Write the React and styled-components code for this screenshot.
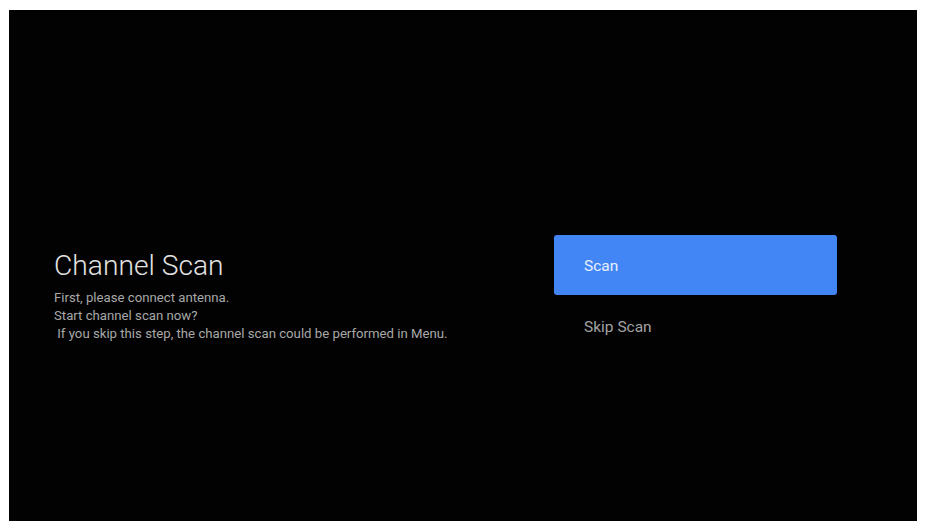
import React from "react";
import styled, { createGlobalStyle } from "styled-components";

const Global = createGlobalStyle`
  html, body { margin: 0; padding: 0; background: #ffffff; }
  body { font-family: Roboto, "Noto Sans", sans-serif; }
`;

const Page = styled.div`
  width: 928px;
  height: 532px;
  padding: 10px 11px 11px 9px;
  box-sizing: border-box;
`;

const Screen = styled.div`
  width: 908px;
  height: 511px;
  background: #020202;
  box-sizing: border-box;
  padding: 225px 0 0 45px;
  display: flex;
  align-items: flex-start;
`;

const Info = styled.div`
  width: 500px;
  padding-top: 13px;
  display: flex;
  flex-direction: column;
  gap: 4px;
`;

const Title = styled.h1`
  margin: 0;
  font-family: Roboto, sans-serif;
  font-weight: 300;
  font-size: 28.2px;
  line-height: 36px;
  color: #e2e2e2;
`;

const Body = styled.p`
  margin: 0;
  padding-top: 1px;
  font-family: Roboto, sans-serif;
  font-size: 13.2px;
  line-height: 18px;
  color: #a8a8a8;
  white-space: pre;
`;

const Options = styled.div`
  display: flex;
  flex-direction: column;
  width: 283px;
`;

const Option = styled.div`
  height: 60px;
  box-sizing: border-box;
  padding: ${(p) => (p.$active ? "2px 0 0 30px" : "0 0 0 30px")};
  display: flex;
  align-items: center;
  border-radius: 3px;
  font-family: Roboto, sans-serif;
  font-size: 15.5px;
  background: ${(p) => (p.$active ? "#4285f4" : "transparent")};
  color: ${(p) => (p.$active ? "#e8f0fe" : "#a3a3a3")};
  margin-top: ${(p) => (p.$active ? "0" : "2px")};
`;

export default function App() {
  return (
    <>
      <Global />
      <Page>
        <Screen>
          <Info>
            <Title>Channel Scan</Title>
            <Body>
              {"First, please connect antenna.\nStart channel scan now?\n If you skip this step, the channel scan could be performed in Menu."}
            </Body>
          </Info>
          <Options>
            <Option $active>Scan</Option>
            <Option>Skip Scan</Option>
          </Options>
        </Screen>
      </Page>
    </>
  );
}
